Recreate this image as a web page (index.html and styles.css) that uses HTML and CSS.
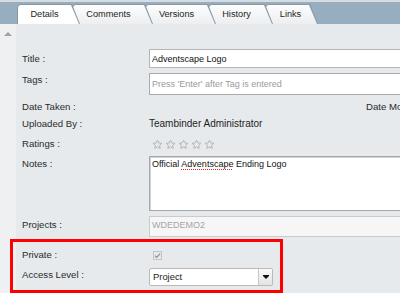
FILE: index.html
```html
<!DOCTYPE html>
<html lang="en">
<head>
  <meta charset="UTF-8">
  <title>Document Details</title>
  <link rel="stylesheet" href="styles.css">
</head>
<body>
  <div class="tabbar">
    <div class="tab tab-active" style="width: 63px"><span class="tab-face">Details</span></div>
    <div class="tab" style="width: 81px"><span class="tab-face">Comments</span></div>
    <div class="tab" style="width: 71px"><span class="tab-face">Versions</span></div>
    <div class="tab" style="width: 65px"><span class="tab-face">History</span></div>
    <div class="tab tab-last" style="width: 53px"><span class="tab-face">Links</span></div>
  </div>

  <div class="content">
    <div class="side"><span class="up-arrow"></span></div>

    <div class="panel">
      <div class="row row-title">
        <label class="label" for="title">Title :</label>
        <input class="field" id="title" type="text" value="Adventscape Logo">
      </div>

      <div class="row row-tags">
        <label class="label" for="tags">Tags :</label>
        <input class="field field-tags" id="tags" type="text" placeholder="Press 'Enter' after Tag is entered">
      </div>

      <div class="row row-text row-date">
        <span class="label">Date Taken :</span>
        <span class="value value-date"></span>
        <span class="label label-clip">Date Modified :</span>
      </div>

      <div class="row row-text row-uploaded">
        <span class="label">Uploaded By :</span>
        <span class="value">Teambinder Administrator</span>
      </div>

      <div class="row row-text row-ratings">
        <span class="label">Ratings :</span>
        <span class="stars">
          <svg width="11" height="11" viewBox="0 0 24 24"><path d="M12 2.5l2.9 6.1 6.6.8-4.9 4.5 1.3 6.6L12 17.3l-5.9 3.2 1.3-6.6-4.9-4.5 6.6-.8z"/></svg>
          <svg width="11" height="11" viewBox="0 0 24 24"><path d="M12 2.5l2.9 6.1 6.6.8-4.9 4.5 1.3 6.6L12 17.3l-5.9 3.2 1.3-6.6-4.9-4.5 6.6-.8z"/></svg>
          <svg width="11" height="11" viewBox="0 0 24 24"><path d="M12 2.5l2.9 6.1 6.6.8-4.9 4.5 1.3 6.6L12 17.3l-5.9 3.2 1.3-6.6-4.9-4.5 6.6-.8z"/></svg>
          <svg width="11" height="11" viewBox="0 0 24 24"><path d="M12 2.5l2.9 6.1 6.6.8-4.9 4.5 1.3 6.6L12 17.3l-5.9 3.2 1.3-6.6-4.9-4.5 6.6-.8z"/></svg>
          <svg width="11" height="11" viewBox="0 0 24 24"><path d="M12 2.5l2.9 6.1 6.6.8-4.9 4.5 1.3 6.6L12 17.3l-5.9 3.2 1.3-6.6-4.9-4.5 6.6-.8z"/></svg>
        </span>
      </div>

      <div class="row row-notes">
        <span class="label">Notes :</span>
        <div class="field field-notes">Official <span class="misspelled">Adventscape</span> Ending Logo</div>
      </div>

      <div class="row row-projects">
        <span class="label">Projects :</span>
        <div class="field field-disabled">WDEDEMO2</div>
      </div>

      <!-- highlighted section -->
      <div class="highlight">
        <div class="row row-private">
          <span class="label">Private :</span>
          <span class="checkbox">
            <svg width="7" height="7" viewBox="0 0 8 8"><path d="M1 4.2l2 2L7 1.8"/></svg>
          </span>
        </div>
        <div class="row row-access">
          <span class="label">Access Level :</span>
          <div class="select">
            <span class="select-text">Project</span>
            <span class="select-button"><span class="caret"></span></span>
          </div>
        </div>
      </div>
    </div>
  </div>
</body>
</html>
```

FILE: styles.css
```css
* {
  box-sizing: border-box;
}

html,
body {
  margin: 0;
  height: 100%;
  overflow: hidden;
}

body {
  width: 400px;
  font-family: "Liberation Sans", Arial, sans-serif;
  font-size: 9.6px;
  color: #2b2b2b;
  background: #e6eaed;
}

/* tab strip */
.tabbar {
  display: flex;
  align-items: flex-end;
  height: 24px;
  padding-left: 17px;
  background: #97aec0;
  border-top: 2px solid #d7dce0;
}

.tab {
  position: relative;
  height: 20px;
  padding: 1px 1px 0;
  margin-left: -8px;
  background: #8a98a4;
  clip-path: polygon(0 100%, 0 3px, 3px 0, calc(100% - 8px) 0, 100% 100%);
}

.tab:first-child {
  margin-left: 0;
}

.tab:nth-child(1) { z-index: 5; }
.tab:nth-child(2) { z-index: 4; }
.tab:nth-child(3) { z-index: 3; }
.tab:nth-child(4) { z-index: 2; }
.tab:nth-child(5) { z-index: 1; }

.tab-face {
  display: block;
  height: 19px;
  line-height: 19px;
  padding-right: 8px;
  text-align: center;
  font-size: 9.2px;
  color: #1e1e1e;
  background: linear-gradient(#fdfdfd, #eceef0);
  clip-path: polygon(0 100%, 0 2px, 2px 0, calc(100% - 8px) 0, 100% 100%);
}

.tab-active .tab-face {
  background: #fff;
}

.tab-last .tab-face {
  padding-left: 6px;
}

/* body */
.content {
  display: flex;
  height: 269px;
}

.side {
  width: 16px;
  flex: none;
  background: #eff0f1;
}

.up-arrow {
  display: block;
  width: 0;
  height: 0;
  margin: 8px 0 0 4px;
  border-left: 4px solid transparent;
  border-right: 4px solid transparent;
  border-bottom: 4px solid #a3a3a3;
}

.panel {
  flex: 1;
  min-width: 0;
  padding: 25px 0 0 6px;
  background: #e6eaed;
}

.row {
  display: flex;
  white-space: nowrap;
}

.label {
  width: 127px;
  flex: none;
}

.label-clip {
  width: auto;
  flex: 1;
  min-width: 0;
  overflow: hidden;
}

.field {
  width: 300px;
  flex: none;
  margin: 0;
  padding: 0 2px;
  font-family: "Liberation Sans", Arial, sans-serif;
  font-size: 9px;
  color: #111;
  background: #fff;
  border: 1px solid #b3b5b7;
  outline: none;
}

.field::placeholder {
  color: #9a9a9a;
}

.row-title {
  align-items: center;
  height: 19px;
}

.row-title .field {
  height: 19px;
}

.row-tags {
  margin-top: 5px;
}

.row-tags .label {
  line-height: 14px;
}

.field-tags {
  height: 22px;
  border-color: #a9abad;
}

.row-text {
  height: 16px;
  line-height: 16px;
}

.row-date {
  margin-top: 4px;
}

.value-date {
  width: 217px;
  flex: none;
}

.row-uploaded {
  margin-top: 1px;
}

.value {
  font-size: 10px;
  color: #1e1e1e;
}

.row-ratings {
  margin-top: 4px;
}

.stars {
  display: flex;
  align-items: center;
  gap: 2px;
  margin-left: 3px;
}

.stars path {
  fill: none;
  stroke: #a9abad;
  stroke-width: 1.8;
  stroke-linejoin: round;
}

.row-notes {
  margin-top: 4px;
}

.row-notes .label {
  line-height: 16px;
}

.field-notes {
  height: 55px;
  padding-top: 1px;
  line-height: 12px;
  border-color: #a6a8aa;
  box-shadow: inset 1px 1px 0 #d0d2d4;
}

.misspelled {
  text-decoration: underline dotted #e02020;
  text-decoration-thickness: 1px;
  text-underline-offset: 2px;
}

.row-projects {
  margin-top: 5px;
}

.row-projects .label {
  line-height: 18px;
}

.field-disabled {
  height: 21px;
  line-height: 17px;
  color: #a5a5a5;
  background: #f6f6f6;
  border-color: #c9cbcd;
}

/* red annotation frame */
.highlight {
  width: 273px;
  margin: 2px 0 0 -12px;
  padding: 5px 0 4px 9px;
  border: 3px solid #f00;
}

.row-private {
  height: 16px;
  line-height: 16px;
  align-items: center;
}

.checkbox {
  display: flex;
  align-items: center;
  justify-content: center;
  width: 9px;
  height: 9px;
  margin-left: 4px;
  background: #e9e9e9;
  border: 1px solid #c4c4c4;
}

.checkbox path {
  fill: none;
  stroke: #8f8f8f;
  stroke-width: 1.4;
}

.row-access {
  margin-top: 5px;
}

.row-access .label {
  line-height: 13px;
}

.select {
  display: flex;
  width: 124px;
  height: 18px;
  background: #fff;
  border: 1px solid #b8babc;
  border-radius: 2px;
}

.select-text {
  flex: 1;
  padding-left: 3px;
  line-height: 16px;
  font-size: 9.4px;
  color: #1e1e1e;
}

.select-button {
  display: flex;
  align-items: center;
  justify-content: center;
  width: 14px;
  background: linear-gradient(#fafafa, #e4e4e4);
  border-left: 1px solid #c6c6c6;
}

.caret {
  width: 0;
  height: 0;
  border-left: 3px solid transparent;
  border-right: 3px solid transparent;
  border-top: 3px solid #111;
  box-shadow: 0 -1px 0 #111;
}
```
